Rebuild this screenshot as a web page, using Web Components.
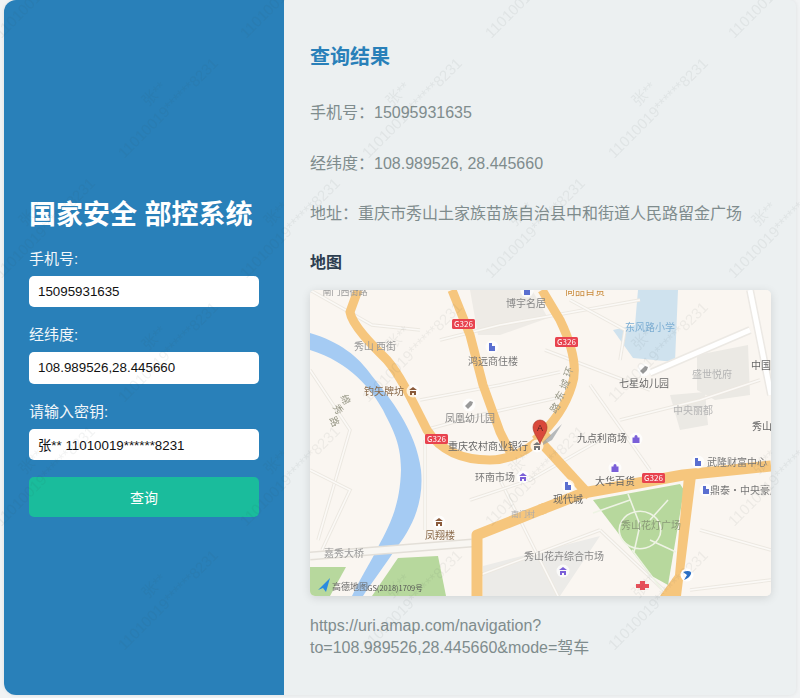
<!DOCTYPE html>
<html lang="zh">
<head>
<meta charset="utf-8">
<title>国家安全 部控系统</title>
<style>
html, body { margin: 0; height: 100%; overflow: hidden; background: #f1f3f4; }
body { font-family: "Liberation Sans", "Noto Sans CJK SC", sans-serif; }
</style>
</head>
<body>
<app-shell>
    <query-panel slot="left" heading="国家安全 部控系统">
        <form-field label="手机号:" value="15095931635"></form-field>
        <form-field label="经纬度:" value="108.989526,28.445660"></form-field>
        <form-field label="请输入密钥:" value="张** 11010019******8231"></form-field>
    </query-panel>
    <result-panel slot="right" heading="查询结果">
        <p slot="lines">手机号&#xFF1A;15095931635</p>
        <p slot="lines">经纬度&#xFF1A;108.989526, 28.445660</p>
        <p slot="lines">地址&#xFF1A;重庆市秀山土家族苗族自治县中和街道人民路留金广场</p>
        <map-view slot="map"></map-view>
        <span slot="link">https://uri.amap.com/navigation?to=108.989526,28.445660&amp;mode=驾车</span>
    </result-panel>
</app-shell>
<water-mark text="张**" sub="11010019******8231"></water-mark>

<script>
class AppShell extends HTMLElement {
    constructor() {
        super();
        this.attachShadow({ mode: "open" }).innerHTML = `
            <style>
                :host {
                    display: flex;
                    height: 695px;
                    margin: 0 4px;
                    background: #ecf0f1;
                    border-radius: 12px 6px 6px 12px;
                    overflow: hidden;
                    box-shadow: 0 0 4px rgba(0, 0, 0, 0.08);
                }
            </style>
            <slot name="left"></slot>
            <slot name="right"></slot>
        `;
    }
}

class QueryPanel extends HTMLElement {
    constructor() {
        super();
        this.attachShadow({ mode: "open" }).innerHTML = `
            <style>
                :host {
                    display: flex;
                    flex-direction: column;
                    flex: 0 0 280px;
                    box-sizing: border-box;
                    padding: 197px 25px 0;
                    background: #2980b9;
                    color: #fff;
                }
                h1 {
                    margin: 0 0 14.6px;
                    font-size: 27px;
                    line-height: 36px;
                    font-weight: 700;
                    white-space: nowrap;
                }
                button {
                    height: 40px;
                    margin-top: 0;
                    border: 0;
                    border-radius: 5px;
                    background: #1abc9c;
                    color: #fff;
                    font: 14px "Liberation Sans", "Noto Sans CJK SC", sans-serif;
                }
            </style>
            <h1></h1>
            <slot></slot>
            <button type="button">查询</button>
        `;
        this.shadowRoot.querySelector("h1").textContent = this.getAttribute("heading");
    }
}

class FormField extends HTMLElement {
    constructor() {
        super();
        this.attachShadow({ mode: "open" }).innerHTML = `
            <style>
                :host {
                    display: block;
                    margin-bottom: 17px;
                }
                label {
                    display: block;
                    margin-bottom: 7px;
                    font-size: 15px;
                    line-height: 21px;
                    color: #f2f7fa;
                }
                input {
                    display: block;
                    box-sizing: border-box;
                    width: 100%;
                    height: 31.5px;
                    padding: 0 9px;
                    border: 0;
                    border-radius: 5px;
                    background: #fff;
                    color: #111;
                    font: 13.33px "Liberation Sans", "Noto Sans CJK SC", sans-serif;
                    outline: none;
                }
            </style>
            <label></label>
            <input type="text">
        `;
        this.shadowRoot.querySelector("label").textContent = this.getAttribute("label");
        const input = this.shadowRoot.querySelector("input");
        input.value = this.getAttribute("value");
        input.setAttribute("value", this.getAttribute("value"));
    }
}

class ResultPanel extends HTMLElement {
    constructor() {
        super();
        this.attachShadow({ mode: "open" }).innerHTML = `
            <style>
                :host {
                    display: block;
                    flex: 1;
                    min-width: 0;
                    box-sizing: border-box;
                    padding: 43px 25px 0 26px;
                    font-size: 16px;
                    line-height: 22px;
                    color: #7f8c8d;
                }
                h2 {
                    margin: 0 0 31px;
                    font-size: 20px;
                    line-height: 28px;
                    color: #2980b9;
                }
                ::slotted(p) {
                    margin: 0 0 28.5px;
                }
                h3 {
                    margin: -2px 0 16px;
                    font-size: 16px;
                    line-height: 22px;
                    color: #2c3e50;
                }
                .link {
                    margin-top: 19px;
                }
            </style>
            <h2></h2>
            <slot name="lines"></slot>
            <h3>地图</h3>
            <slot name="map"></slot>
            <div class="link"><slot name="link"></slot></div>
        `;
        this.shadowRoot.querySelector("h2").textContent = this.getAttribute("heading");
    }
}

const MAP_LABELS = [
    // text, x, y (centre), colour, size
    ["南门西街路", 345, 291, "#999", 9], ["博宇名居", 526, 303, "#888"], ["秀山 西街", 375, 346, "#999"],
    ["鸿远商住楼", 493, 361, "#777"], ["钓矢牌坊", 384, 391, "#8a6a4a"], ["凤凰幼儿园", 470, 418, "#888"],
    ["重庆农村商业银行", 488, 446, "#666"], ["环南市场", 495, 477, "#777"], ["南门村", 523, 513, "#aaa", 8],
    ["凤翔楼", 440, 535, "#8a6a4a"], ["秀山花卉综合市场", 564, 556, "#888"], ["嘉秀大桥", 344, 553, "#999"],
    ["高德地图", 350, 586, "#666", 9], ["GS(2018)1709号", 395, 587, "#555", 7.5], ["尚品百货", 585, 291, "#c98a3a"],
    ["东风路小学", 650, 327, "#7eaed3"], ["七星幼儿园", 644, 383, "#666"], ["盛世悦府", 712, 374, "#b5b5b5"],
    ["中央丽都", 693, 410, "#b5b5b5"], ["中国", 761, 365, "#666"], ["秀山", 762, 426, "#666"],
    ["九点利商场", 602, 438, "#666"], ["大华百货", 615, 481, "#666"], ["现代城", 568, 499, "#666"],
    ["武隆财富中心", 737, 462, "#777"], ["鼎泰·中央豪庭", 745, 490, "#777"], ["秀山花灯广场", 651, 525, "#8a9a78"]
];
const MAP_SHIELDS = [[452, 319], [425, 434], [555, 337], [642, 473]];
// b building, h house, s shop, t tag
const MAP_POIS = [
    [527, 291, "b", "#5a6fd0"], [492, 347, "b", "#5a6fd0"], [413, 391, "h", "#8a5a3a"], [469, 405, "t", "#999"],
    [523, 477, "h", "#7a5fd8"], [439, 522, "h", "#8a5a3a"], [644, 370, "t", "#999"], [636, 439, "s", "#7a5fd8"],
    [615, 468, "s", "#7a5fd8"], [568, 486, "b", "#5a6fd0"], [698, 462, "b", "#5a6fd0"], [706, 490, "b", "#5a6fd0"],
    [563, 571, "h", "#7a5fd8"], [537, 446, "h", "#777"]
];
const POI_SHAPES = {
    b: "M-3 4V-4H0V-1H3V4Z",
    h: "M-4 -1L0 -4L4 -1ZM-3 0H3V4H1V2H-1V4H-3Z",
    s: "M-3.5 -1.5H-1.5V-2.5A1.5 1.5 0 0 1 1.5 -2.5V-1.5H3.5V4H-3.5Z",
    t: "M-4 1L1 -4L4 -3L3 0L-1 4Z"
};

class MapView extends HTMLElement {
    constructor() {
        super();
        const minor = [
            "M310 290L372 325L420 330", "M310 370L350 430L318 540", "M310 470L350 490L322 550",
            "M425 440V530", "M440 340L500 325L640 300", "M420 400L500 385L560 372",
            "M425 430L480 415L570 395", "M570 300L625 330L620 360", "M500 480L560 600",
            "M545 350L650 390", "M590 385L650 470", "M620 420L700 400L760 380", "M600 530L670 596",
            "M700 530L771 550", "M690 590L771 580", "M470 500L530 480L600 440", "M480 575L600 530"
        ].map((d) => `<path d="${d}" stroke="#ece8e1" stroke-width="3.5" fill="none"/><path d="${d}" stroke="#fbf9f6" stroke-width="1.6" fill="none"/>`).join("");
        const labels = MAP_LABELS.map(([t, x, y, c, s]) =>
            `<text x="${x}" y="${y + 3.5}" fill="${c}" font-size="${s || 10}" text-anchor="middle">${t}</text>`).join("");
        const shields = MAP_SHIELDS.map(([x, y]) =>
            `<rect x="${x}" y="${y}" width="23" height="10" rx="1.5" fill="#e8434f"/><text x="${x + 11.5}" y="${y + 8}" fill="#fff" font-size="8" text-anchor="middle">G326</text>`).join("");
        const pois = MAP_POIS.map(([x, y, k, c]) =>
            `<g transform="translate(${x} ${y})"><circle r="6.5" fill="#fff" opacity=".75"/><path d="${POI_SHAPES[k]}" fill="${c}" fill-rule="evenodd"/></g>`).join("");
        const road = (d, w) => `<path d="${d}" stroke="#f6c67d" stroke-width="${w}" fill="none" stroke-linejoin="round"/>`;
        this.attachShadow({ mode: "open" }).innerHTML = `
            <style>
                :host {
                    display: block;
                    height: 306px;
                    border-radius: 5px;
                    overflow: hidden;
                    box-shadow: 0 2px 10px rgba(0, 0, 0, 0.12);
                    background: #faf6f1;
                }
                svg {
                    display: block;
                    width: 100%;
                    height: 100%;
                    font-family: "Noto Sans CJK SC", sans-serif;
                    filter: blur(0.35px);
                }
            </style>
            <svg viewBox="310 290 461 306" preserveAspectRatio="none">
                <rect x="310" y="290" width="461" height="306" fill="#faf6f1"/>
                <path d="M470 290H532L548 318L500 335L478 335Z" fill="#eeebe6"/>
                <path d="M638 290H678L675 362L633 358L613 330L635 325Z" fill="#cfe2ee"/>
                <path d="M697 355L748 345L750 395L715 400L697 390Z" fill="#ebe9e4"/>
                <path d="M670 395L705 392L708 425L680 430Z" fill="#ebe9e4"/>
                <path d="M483 566L600 536L560 596H483Z" fill="#ecebe8"/>
                <path d="M310 567H346L330 596H310Z" fill="#b7d89d"/>
                <path d="M372 596L398 558L438 556L446 596Z" fill="#b7d89d"/>
                ${minor}
                <path d="M750 290L771 395" stroke="#ece9e4" stroke-width="8" fill="none"/>
                <path d="M750 290L771 395" stroke="#fff" stroke-width="5" fill="none"/>
                <path d="M650 373L750 330" stroke="#ece9e4" stroke-width="8" fill="none"/>
                <path d="M650 373L750 330" stroke="#fff" stroke-width="5" fill="none"/>
                <path d="M310 333C340 342 358 356 372 376C390 398 416 430 421 470C424 500 414 525 397 547C385 565 370 585 363 596H352C362 575 372 560 378 547C390 525 400 505 401 470C401 440 390 425 383 410C372 390 350 362 310 350Z" fill="#a5cbf3"/>
                <path d="M310 556L472 543" stroke="#e3dfd8" stroke-width="9" fill="none"/>
                <path d="M310 556L472 543" stroke="#f8f6f2" stroke-width="6" fill="none"/>
                <path d="M593 500L680 484L684 490L668 585L650 575Z" fill="#b7d89d"/>
                <path d="M593 513L630 500M628 494L640 525L634 552M668 500L650 520M620 535A20 18 0 1 0 660 525A20 18 0 1 0 620 535M650 540L676 552M632 550L662 590" stroke="#eef3e4" stroke-width="1.6" fill="none"/>
                ${road("M358 290L350 312C352 325 372 345 387 360C400 375 412 400 427 430C440 450 462 460 490 460C512 460 530 450 548 432", 9)}
                ${road("M452 290L470 335L483 385L500 432L510 452", 9)}
                ${road("M542 290L560 320C572 345 578 368 572 385C566 405 552 425 535 440", 9)}
                ${road("M537 438L590 496", 10)}
                ${road("M540 510L583 493L683 475L771 466", 11)}
                ${road("M545 508L477 535V596", 11)}
                <path d="M684 476L696 476L681 596H660L675 575Z" fill="#f6c67d"/>
                ${shields}
                ${pois}
                ${labels}
                <g fill="#998" font-size="10" text-anchor="middle">
                    <text transform="translate(572 373) rotate(-70)">环</text>
                    <text transform="translate(568 386) rotate(-65)">城</text>
                    <text transform="translate(563 398) rotate(-60)">东</text>
                    <text transform="translate(558 410) rotate(-55)">路</text>
                    <text transform="translate(342 401) rotate(65)">绵</text>
                    <text transform="translate(335 411) rotate(60)">秀</text>
                    <text transform="translate(331 423) rotate(65)">路</text>
                </g>
                <path d="M318 590L330 578L326 592L323 588Z" fill="#2a8be0"/>
                <circle cx="687" cy="575" r="6.5" fill="#fff"/>
                <path d="M683 572C688 570 692 571 691 574C690 577 687 579 684 580L687 575Z" fill="#2a70c8"/>
                <path d="M636 584H640V581H645V584H649V588H645V590H640V588H636Z" fill="#e8505a"/>
                <path d="M543 442L562 424L552 440L543 445Z" fill="#98a0a4" opacity=".7"/>
                <path d="M540 444C537 436 533 433 533 427A7 7 0 0 1 547 427C547 433 543 436 540 444Z" fill="#d9493b" stroke="#a63227" stroke-width=".6"/>
                <text x="540" y="431" font-size="9" fill="#522" text-anchor="middle" font-family="Liberation Sans">A</text>
            </svg>
        `;
    }
}

class WaterMark extends HTMLElement {
    constructor() {
        super();
        this.attachShadow({ mode: "open" }).innerHTML = `
            <style>
                :host {
                    position: fixed;
                    inset: 0;
                    overflow: hidden;
                    pointer-events: none;
                }
                div {
                    position: absolute;
                    width: 170px;
                    text-align: center;
                    font: 15px/20px "Liberation Sans", "Noto Sans CJK SC", sans-serif;
                    color: rgba(60, 70, 80, 0.065);
                    white-space: nowrap;
                    transform: translate(-85px, -20px) rotate(-45deg);
                }
            </style>
        `;
        const rows = [34, 154, 274, 398, 522, 646];
        rows.forEach((y, r) => {
            const xs = r % 2 ? [113, 357, 603] : [-10, 235, 480, 723];
            xs.forEach((x) => {
                const tile = document.createElement("div");
                tile.textContent = this.getAttribute("text");
                tile.append(document.createElement("br"), this.getAttribute("sub"));
                // x,y is where the number line starts, the tile is placed by its centre
                tile.style.left = x + 48 + "px";
                tile.style.top = y - 48 - 5 + "px";
                this.shadowRoot.append(tile);
            });
        });
    }
}

customElements.define("app-shell", AppShell);
customElements.define("query-panel", QueryPanel);
customElements.define("form-field", FormField);
customElements.define("result-panel", ResultPanel);
customElements.define("map-view", MapView);
customElements.define("water-mark", WaterMark);
</script>
</body>
</html>
